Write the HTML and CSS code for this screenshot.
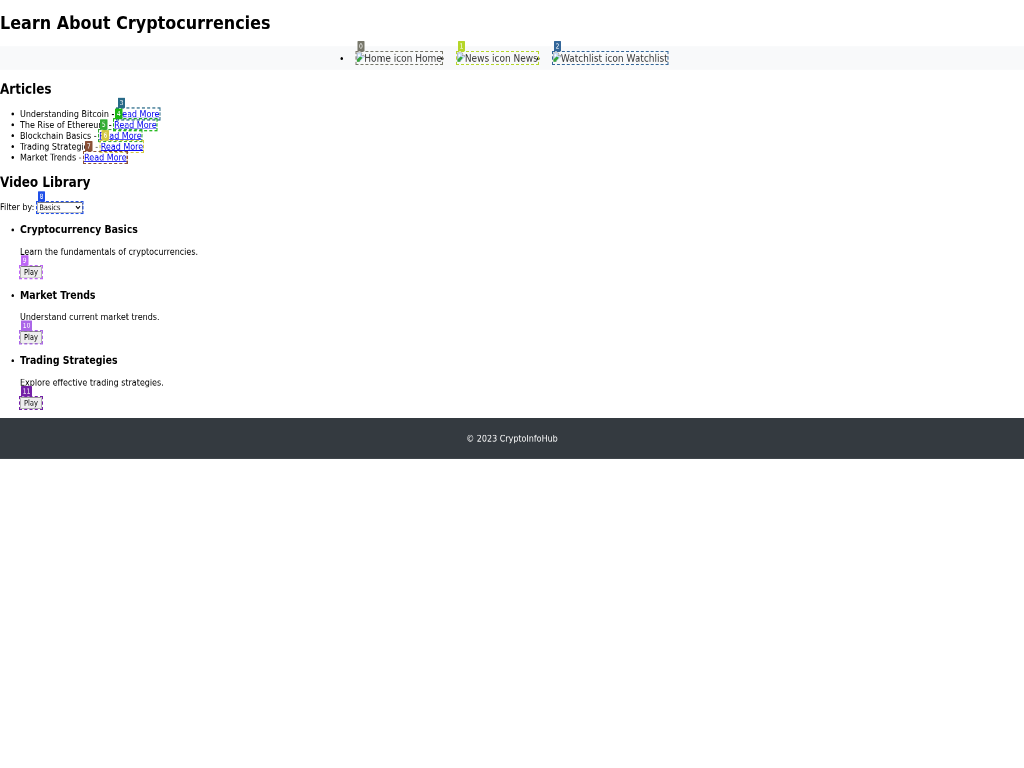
FILE: index.html
```
<!DOCTYPE html>
<html lang="en">
<head>
<meta charset="utf-8">
<title>Learn About Cryptocurrencies</title>
<link rel="stylesheet" href="styles.css">
</head>
<body>
<svg class="defs" width="0" height="0">
  <symbol id="broken" viewBox="0 0 16 16">
    <path d="M1 .5h9.500l5 5v10H1z" fill="#c5d9f7" stroke="#8c8c8c"/>
    <path d="M10.500 .5v5h5" fill="#fff" stroke="#8c8c8c"/>
    <circle cx="5" cy="5" r="2" fill="#fff"/>
    <path d="M1 16v-4l6-5 5 2-7 7z" fill="#35a53a"/>
    <path d="M6 16.500L16.500 7v9.500z" fill="#f8f9fa"/>
  </symbol>
</svg>
<div class="page">
  <h1>Learn About Cryptocurrencies</h1>
  <nav class="nav">
    <ul class="nav-list">
      <li><a class="mark c0"><svg class="pic"><use href="#broken"/></svg>Home icon Home<b class="tag">0</b></a></li>
      <li><a class="mark c1"><svg class="pic"><use href="#broken"/></svg>News icon News<b class="tag">1</b></a></li>
      <li><a class="mark c2"><svg class="pic"><use href="#broken"/></svg>Watchlist icon Watchlist<b class="tag">2</b></a></li>
    </ul>
  </nav>
  <h2>Articles</h2>
  <ul>
    <li>Understanding Bitcoin - <a class="mark link c3">Read More<b class="tag">3</b></a></li>
    <li>The Rise of Ethereum - <a class="mark link c4">Read More<b class="tag">4</b></a></li>
    <li>Blockchain Basics - <a class="mark link c5">Read More<b class="tag">5</b></a></li>
    <li>Trading Strategies - <a class="mark link c6">Read More<b class="tag">6</b></a></li>
    <li>Market Trends - <a class="mark link c7">Read More<b class="tag">7</b></a></li>
  </ul>
  <h2>Video Library</h2>
  <label>Filter by:</label>
  <span class="mark c8"><select><option>Basics</option></select><b class="tag">8</b></span>
  <ul>
    <li>
      <h3>Cryptocurrency Basics</h3>
      <p>Learn the fundamentals of cryptocurrencies.</p>
      <span class="mark c9"><button>Play</button><b class="tag">9</b></span>
    </li>
    <li>
      <h3>Market Trends</h3>
      <p>Understand current market trends.</p>
      <span class="mark c10"><button>Play</button><b class="tag">10</b></span>
    </li>
    <li>
      <h3>Trading Strategies</h3>
      <p>Explore effective trading strategies.</p>
      <span class="mark c11"><button>Play</button><b class="tag">11</b></span>
    </li>
  </ul>
  <footer class="footer"><p>© 2023 CryptoInfoHub</p></footer>
</div>
</body>
</html>
```
FILE: styles.css
```
html, body { margin: 0; width: 1024px; height: 768px; overflow: hidden; background: #fff; }
.defs { display: block; }
.page {
  width: 2048px;
  height: 1340px;
  display: flow-root;
  transform: scale(0.5, 0.5713);
  transform-origin: 0 0;
  will-change: transform;
  background: #fff;
  font: 16px "DejaVu Sans", sans-serif;
  color: #000;
}
.nav { background: #f8f9fa; padding: 10px 0; }
.nav-list { display: flex; justify-content: center; margin: 0; padding: 0; }
.nav-list li { height: 21px; }
.nav-list a { color: #333; margin: 0 15px; font-size: 18px; }
.pic { width: 16px; height: 16px; vertical-align: baseline; }
.mark { position: relative; display: inline-block; color: inherit; }
.mark::after {
  content: "";
  position: absolute;
  inset: -2px;
  border: 2px dashed var(--c);
}
.link { color: #0000ee; text-decoration: underline; }
.tag {
  position: absolute;
  z-index: 2;
  left: 2px;
  top: -19px;
  height: 18px;
  padding: 0 3.5px;
  border-radius: 1px;
  background: var(--c);
  color: #fff;
  font: 12px/18px "DejaVu Sans", sans-serif;
  display: inline-block;
  text-decoration: none;
}
.c0 { --c: #77776a; }
.c1 { --c: #b5d629; }
.c2 { --c: #336699; }
.c3 { --c: #286a88; }
.c4 { --c: #1cb614; }
.c5 { --c: #33ac33; }
.c6 { --c: #d3c843; }
.c7 { --c: #8a5138; }
.c8 { --c: #1f4fe8; }
.c9 { --c: #bd66f5; }
.c10 { --c: #ab66e8; }
.c11 { --c: #7420a8; }
select { font: 13.333px "DejaVu Sans", sans-serif; width: 91px; margin: 0; display: block; }
button { font: 13.333px "DejaVu Sans", sans-serif; margin: 0; display: block; }
.footer { background: #343a40; color: #fff; padding: 10px 0; text-align: center; }
```
